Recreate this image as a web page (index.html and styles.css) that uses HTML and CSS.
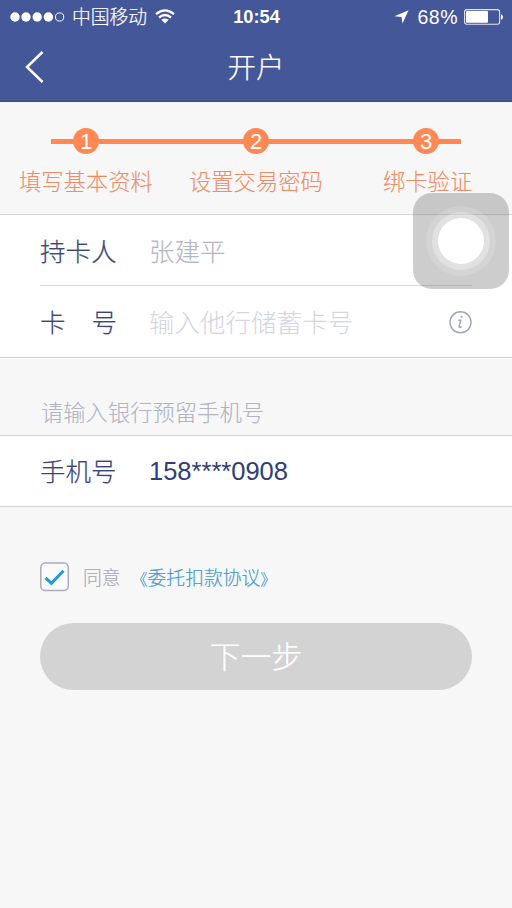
FILE: index.html
```html
<!DOCTYPE html>
<html lang="zh-CN">
<head>
<meta charset="utf-8">
<title>开户</title>
<link rel="stylesheet" href="styles.css">
</head>
<body>
<header class="header">
  <div class="status">
    <div class="status-left">
      <svg width="55" height="12" viewBox="0 0 55 12"><g fill="#fff"><circle cx="5" cy="6" r="4.7"/><circle cx="16" cy="6" r="4.7"/><circle cx="27.2" cy="6" r="4.7"/><circle cx="38.4" cy="6" r="4.7"/></g><circle cx="49.6" cy="6" r="4.1" fill="none" stroke="#fff"/></svg>
      <span class="carrier">中国移动</span>
      <svg class="wifi" width="20" height="15" viewBox="0 0 20 15"><g fill="none" stroke="#fff" stroke-width="2.3"><path d="M1 5.2Q10-2.5 19 5.2"/><path d="M4 8.5Q10 3.5 16 8.5"/></g><path d="M6.3 10.8Q10 8 13.7 10.8L10 14.5Z" fill="#fff"/></svg>
    </div>
    <span class="clock">10:54</span>
    <div class="status-right">
      <svg width="15" height="14" viewBox="0 0 15 14"><path d="M14.6.2L8.5 13.6 7.5 7 .4 6.3Z" fill="#fff"/></svg>
      <span class="percent">68%</span>
      <svg class="battery" width="39" height="16" viewBox="0 0 39 16"><rect x=".6" y=".6" width="35" height="14.6" rx="2.2" fill="none" stroke="#fff" stroke-opacity=".85" stroke-width="1.1"/><rect x="2" y="2" width="22" height="11.8" rx="1" fill="#fff"/><path d="M37 5.2Q39 5.6 39 8T37 10.8Z" fill="#fff"/></svg>
    </div>
  </div>
  <nav class="nav">
    <svg class="back" width="20" height="34" viewBox="0 0 20 34"><path d="M17.5 2L2 17 17.5 32" fill="none" stroke="#fff" stroke-width="2.5"/></svg>
    <h1 class="title">开户</h1>
  </nav>
</header>
<main>
  <section class="steps">
    <div class="track"><span class="dot">1</span><span class="dot">2</span><span class="dot">3</span></div>
    <div class="step-labels"><span>填写基本资料</span><span>设置交易密码</span><span>绑卡验证</span></div>
  </section>
  <section class="group">
    <div class="row row-first"><span class="label">持卡人</span><span class="value muted">张建平</span></div>
    <div class="row"><span class="label split"><span>卡</span><span>号</span></span><span class="value hint">输入他行储蓄卡号</span>
      <svg class="info" width="24" height="24" viewBox="0 0 24 24"><g fill="none" stroke="#a3a7bd" stroke-width="1.5"><circle cx="12.5" cy="12.3" r="10.5"/><path d="M10.3 10.2H12.8L11.1 16.4Q10.9 18 13.7 16.8"/></g><circle cx="13.6" cy="6.8" r="1.1" fill="#a3a7bd"/></svg>
    </div>
  </section>
  <p class="note">请输入银行预留手机号</p>
  <section class="group">
    <div class="row row-phone"><span class="label">手机号</span><span class="value phone">158****0908</span></div>
  </section>
  <div class="agree">
    <svg width="31" height="30" viewBox="0 0 31 30"><rect x="1.8" y="1" width="27.5" height="27.5" rx="4.5" fill="#fafafa" stroke="#aaaac0" stroke-width="1.5"/><path d="M6.5 15.8L12.4 21.4 24.5 8.8" fill="none" stroke="#2299da" stroke-width="3"/></svg>
    <span class="agree-text">同意</span><span class="agree-link"><span class="bracket">《</span>委托扣款协议<span class="bracket">》</span></span>
  </div>
  <button class="next">下一步</button>
</main>
<div class="assistive"><span class="halo"></span></div>
</body>
</html>
```

FILE: styles.css
```css
* { box-sizing: border-box; }
body {
  margin: 0;
  height: 908px;
  overflow: hidden;
  position: relative;
  background: #f7f7f7;
  font-family: "Liberation Sans", "Noto Sans CJK SC", sans-serif;
  font-weight: 300;
}
svg { display: block; flex: none; }
span { white-space: nowrap; }
.header { height: 102px; background: #445798; color: #fff; border-bottom: 1px solid #3b4c8c; }
.status { height: 33px; display: grid; grid-template-columns: 1fr auto 1fr; align-items: center; padding: 0 9px 0 10px; }
.status-left, .status-right { display: flex; align-items: center; }
.status-right { justify-content: flex-end; }
.carrier { font-size: 18.8px; line-height: 28px; margin-left: 7px; padding-top: 2px; -webkit-text-stroke: .2px; }
.wifi { margin-left: 8px; }
.clock { font-size: 18.2px; font-weight: 700; padding-top: 2px; }
.percent { font-size: 19.5px; letter-spacing: .5px; margin: 0 6px 0 8px; padding-top: 1px; }
.nav { height: 68px; display: grid; grid-template-columns: 56px 1fr 56px; align-items: center; }
.back { margin-left: 25px; }
.title { margin: 0; padding-top: 2px; font-size: 28.5px; font-weight: 300; line-height: 40px; text-align: center; -webkit-text-stroke: .2px; }
.steps { height: 112px; padding-top: 26px; }
.track {
  width: 410px;
  height: 26px;
  margin-left: 51px;
  padding: 0 22px;
  display: flex;
  align-items: center;
  justify-content: space-between;
  background: linear-gradient(#ff8854, #ff8854) center / 100% 5px no-repeat;
}
.dot { width: 26px; height: 26px; border-radius: 50%; background: #ff8854; color: #fff; font-size: 22px; line-height: 27px; text-align: center; }
.step-labels { display: grid; grid-template-columns: 170px 194px auto; padding-left: 19px; margin-top: 13px; font-size: 22.3px; line-height: 32px; color: #f28b64; -webkit-text-stroke: .1px; }
.group { background: #fff; border-top: 1px solid #d4d4d6; border-bottom: 1px solid #d4d4d6; }
.row { margin: 0 40px; height: 71px; display: flex; align-items: center; font-size: 25.5px; line-height: 38px; color: #3b4778; }
.row-first { border-bottom: 1px solid #d9d9dd; }
.row-phone { height: 70px; }
.label { width: 77px; padding-top: 3px; -webkit-text-stroke: .2px; }
.row-phone .label { padding-top: 2px; }
.split { display: flex; justify-content: space-between; }
.value { margin-left: 32px; padding-top: 3px; }
.muted { color: #b4b6c3; -webkit-text-stroke: .1px; }
.hint { color: #d4d5df; }
.phone { color: #303d76; padding-top: 0; }
.info { margin-left: auto; }
.note { margin: 0; height: 77px; padding: 39px 0 0 41px; font-size: 22.3px; line-height: 34px; color: #b3b4c3; -webkit-text-stroke: .1px; }
.agree { height: 30px; margin: 55px 0 0 39px; display: flex; align-items: center; font-size: 18.8px; line-height: 28px; }
.agree-text, .agree-link { padding-top: 4px; -webkit-text-stroke: .15px; }
.agree-text { margin-left: 13px; color: #aaa6bc; }
.agree-link { margin-left: 11px; color: #4299d0; }
.bracket { font-size: 16px; line-height: 1; }
.next { display: block; width: 432px; height: 67px; margin: 31px 0 0 40px; padding: 3px 0 0; border: 0; border-radius: 34px; background: #d3d3d3; color: #fff; font: inherit; font-size: 31px; line-height: 64px; -webkit-text-stroke: .2px; }
.assistive { position: absolute; left: 413px; top: 193px; width: 96px; height: 96px; border-radius: 19px; background: rgba(90, 90, 90, .3); display: flex; align-items: center; justify-content: center; }
.halo { width: 46px; height: 46px; border-radius: 50%; background: #fff; box-shadow: 0 0 0 6px rgba(255, 255, 255, .3), 0 0 0 12px rgba(255, 255, 255, .15); }
```
